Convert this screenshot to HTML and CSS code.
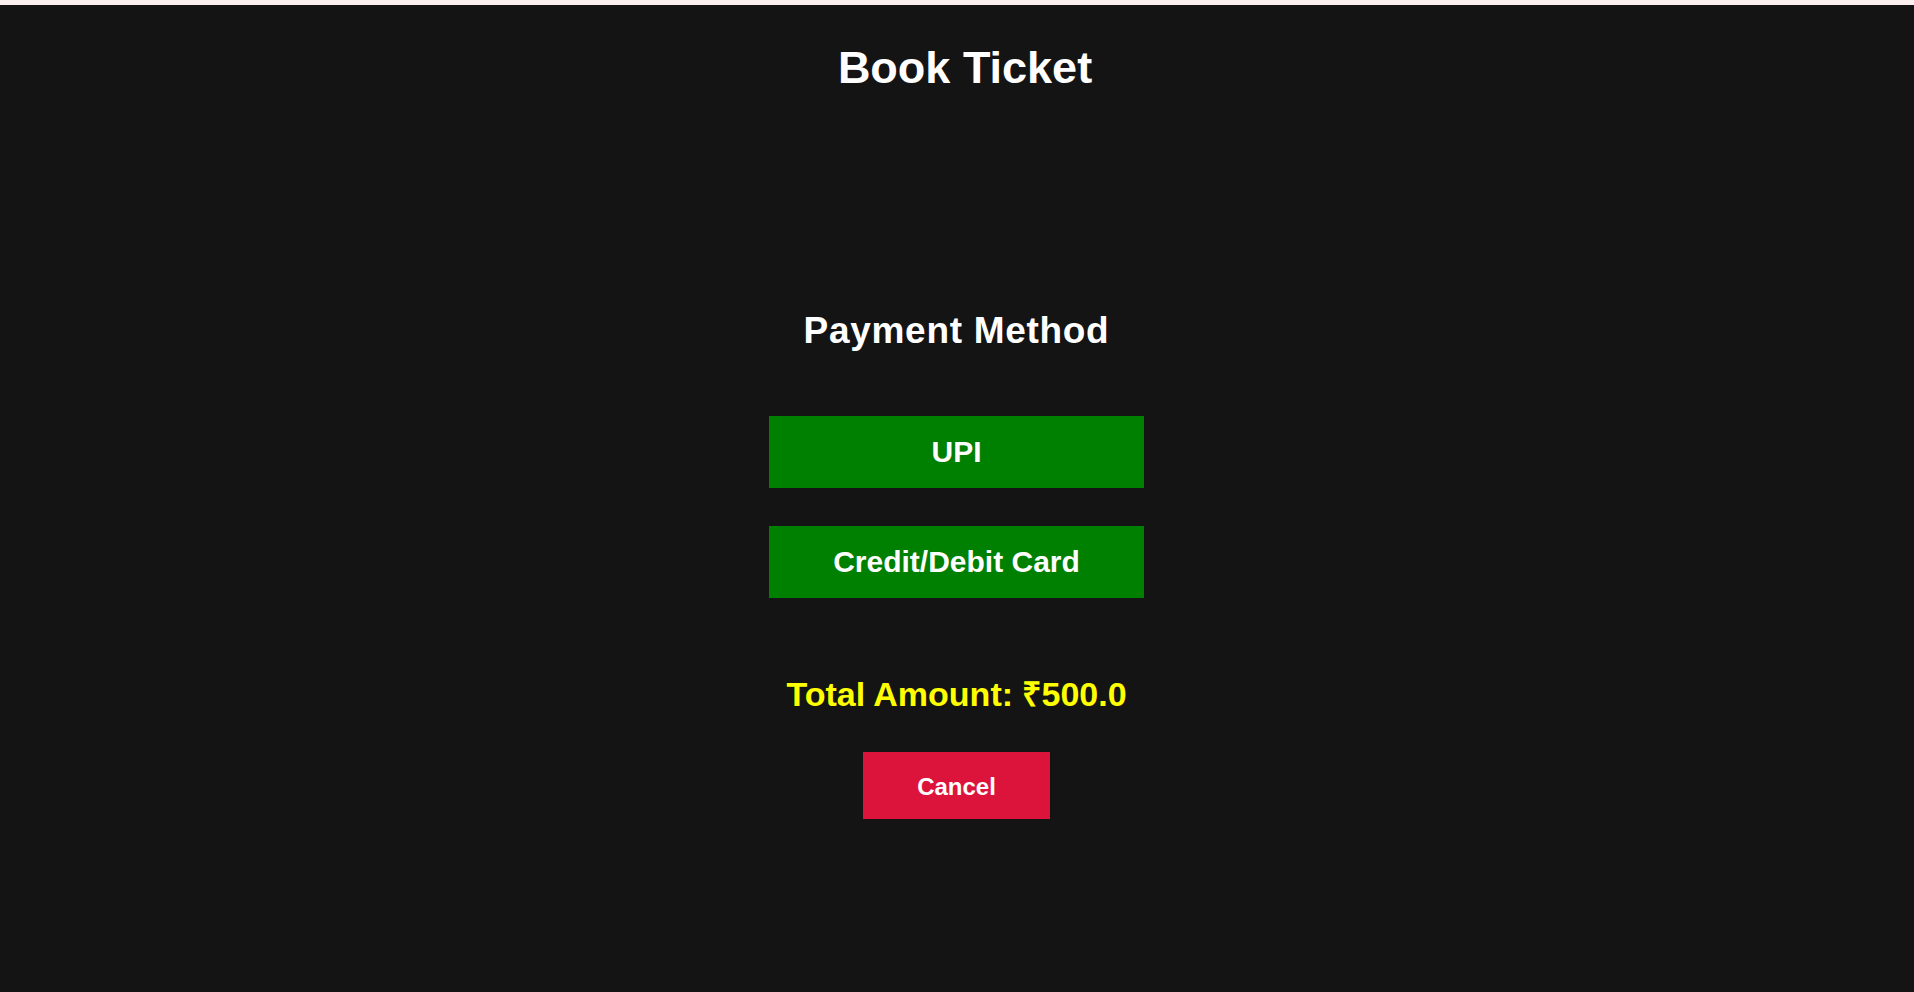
FILE: index.html
```html
<!DOCTYPE html>
<html lang="en">
<head>
<meta charset="utf-8">
<title>Book Ticket</title>
<link rel="stylesheet" href="styles.css">
</head>
<body>
<div class="page">
  <h1 class="title">Book Ticket</h1>
  <section class="payment">
    <h2 class="payment-title">Payment Method</h2>
    <div class="methods">
      <button class="method-btn">UPI</button>
      <button class="method-btn">Credit/Debit Card</button>
    </div>
    <p class="total">Total Amount: ₹500.0</p>
    <button class="cancel-btn">Cancel</button>
  </section>
</div>
</body>
</html>
```

FILE: styles.css
```css
html, body {
  margin: 0;
  padding: 0;
}
body {
  background: #fbf0ef;
  font-family: "Liberation Sans", Arial, sans-serif;
}
.page {
  margin-top: 5px;
  min-height: calc(100vh - 5px);
  background: #141414;
  color: #ffffff;
  display: flex;
  flex-direction: column;
  align-items: center;
}
.title {
  margin: 40px 0 0;
  padding-left: 16px;
  font-size: 45px;
  line-height: 1;
  font-weight: bold;
}
.payment {
  display: flex;
  flex-direction: column;
  align-items: center;
  margin-top: 222px;
  margin-right: 1px;
}
.payment-title {
  margin: 0;
  font-size: 37px;
  line-height: 1;
  letter-spacing: 0.7px;
  font-weight: bold;
}
.methods {
  display: flex;
  flex-direction: column;
  gap: 38px;
  margin-top: 67px;
}
.method-btn {
  width: 375px;
  height: 72px;
  border: none;
  background: #008000;
  color: #ffffff;
  font-family: "Liberation Sans", Arial, sans-serif;
  font-size: 30px;
  font-weight: bold;
  padding: 0;
  cursor: pointer;
}
.total {
  margin: 79px 0 0;
  font-size: 34px;
  line-height: 1;
  font-weight: bold;
  color: #ffff00;
}
.cancel-btn {
  margin-top: 41px;
  width: 187px;
  height: 67px;
  border: none;
  background: #dc143c;
  color: #ffffff;
  font-family: "Liberation Sans", Arial, sans-serif;
  font-size: 24px;
  font-weight: bold;
  padding: 3px 0 0;
  cursor: pointer;
}
```
